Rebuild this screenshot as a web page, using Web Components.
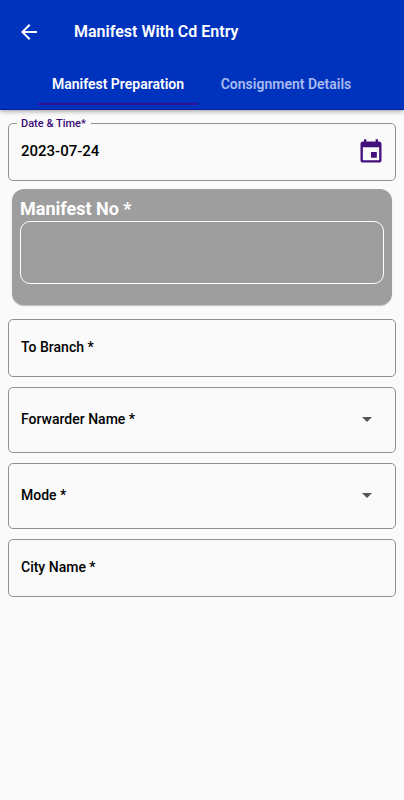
<!DOCTYPE html>
<html lang="en">
<head>
<meta charset="utf-8">
<meta name="viewport" content="width=device-width, initial-scale=1">
<title>Manifest With Cd Entry</title>
<style>
  body { margin: 0; min-height: 100vh; background: #fafafa; color: #000; font-family: Roboto, "Liberation Sans", sans-serif; font-weight: 500; }
</style>
</head>
<body>
<manifest-page></manifest-page>

<script>
const define = (name, html, setup) => customElements.define(name, class extends HTMLElement {
  constructor() {
    super();
    this.attachShadow({ mode: "open" });
  }
  connectedCallback() {
    if (this.shadowRoot.childNodes.length) return;
    const t = document.createElement("template");
    t.innerHTML = html;
    this.shadowRoot.append(t.content.cloneNode(true));
    if (setup) setup(this, this.shadowRoot);
  }
});

const control = `
  * { box-sizing: border-box; }
  :host { display: block; }
  .box { position: relative; display: grid; grid-template-columns: 1fr auto; align-items: center; border: 1px solid #8f8f8f; border-radius: 5px; min-height: 58px; }
  input, select { grid-area: 1 / 1 / 2 / 3; width: 100%; align-self: stretch; border: 0; outline: 0; margin: 0; padding: 0 12px 2px; background: none; font: inherit; font-size: 14px; color: inherit; appearance: none; border-radius: 5px; }
  label { font-size: 14px; line-height: 16px; }
  .inside { grid-area: 1 / 1; padding: 0 12px 2px; pointer-events: none; }
  .filled .inside { visibility: hidden; }
`;

const nameField = (host, root) => {
  root.querySelector("label").textContent = host.getAttribute("label");
  const field = root.querySelector("input, select");
  field.addEventListener("input", () =>
    root.querySelector(".box").classList.toggle("filled", field.value !== ""));
};

define("app-bar", `
  <style>
    :host { display: block; background: #0033bd; color: #fff; border-bottom: 1px solid #0a1f9c; box-shadow: 0 1px 5px rgba(0, 0, 0, .4); }
    .top { display: flex; align-items: center; gap: 33px; height: 64px; padding: 0 17px; }
    button { display: flex; border: 0; padding: 0; background: none; color: inherit; }
    h1 { margin: 0; font-size: 16px; line-height: 20px; font-weight: 600; }
  </style>
  <div class="top">
    <button type="button" aria-label="Back">
      <svg width="24" height="24" viewBox="0 0 24 24" fill="currentColor"><path d="M20 11H7.83l5.59-5.59L12 4l-8 8 8 8 1.41-1.41L7.83 13H20v-2z"/></svg>
    </button>
    <h1></h1>
  </div>
  <slot></slot>
`, (host, root) => { root.querySelector("h1").textContent = host.getAttribute("heading"); });

define("tab-strip", `
  <style>:host { display: flex; justify-content: center; gap: 8px; padding-bottom: 4px; font-weight: 600; }</style>
  <slot></slot>
`, host => {
  host.setAttribute("role", "tablist");
});

define("tab-item", `
  <style>
    :host { display: block; }
    button { display: block; min-width: 160px; height: 41px; padding: 0 12px; border: 0; border-bottom: 2px solid transparent; background: none; font: inherit; font-size: 14px; line-height: 16px; color: #a9bbf0; white-space: nowrap; }
    button[aria-selected="true"] { color: #fff; border-color: #34128f; }
  </style>
  <button type="button" role="tab"><slot></slot></button>
`, (host, root) => {
  root.querySelector("button").setAttribute("aria-selected", host.hasAttribute("selected"));
});

define("date-field", `
  <style>${control}
    label { position: absolute; top: -7px; left: 8px; padding: 0 5px 0 4px; background: #fafafa; color: #3a0a78; font-size: 11px; line-height: 14px; }
    input { font-size: 15px; }
    button { grid-area: 1 / 2; display: flex; margin-right: 10px; border: 0; padding: 0; background: none; color: #43107c; }
  </style>
  <div class="box">
    <label for="f"></label>
    <input id="f" type="text" readonly>
    <button type="button" aria-label="Choose date">
      <svg width="28" height="28" viewBox="0 0 24 24" fill="currentColor"><path d="M17 12h-5v5h5v-5zM16 1v2H8V1H6v2H5c-1.11 0-1.99.9-1.99 2L3 19c0 1.1.89 2 2 2h14c1.1 0 2-.9 2-2V5c0-1.1-.9-2-2-2h-1V1h-2zm3 18H5V8h14v11z"/></svg>
    </button>
  </div>
`, (host, root) => {
  root.querySelector("label").textContent = host.getAttribute("label");
  root.querySelector("input").value = host.getAttribute("value");
});

define("text-field", `
  <style>${control}</style>
  <div class="box">
    <label class="inside" for="f"></label>
    <input id="f" type="text">
  </div>
`, nameField);

define("select-field", `
  <style>${control}
    .box { min-height: 66px; }
    svg { grid-area: 1 / 2; margin: 0 16px 2px 0; pointer-events: none; }
  </style>
  <div class="box">
    <label class="inside" for="f"></label>
    <select id="f"><option value=""></option></select>
    <svg width="24" height="24" viewBox="0 0 24 24" fill="#555"><path d="M7 10l5 5 5-5z"/></svg>
  </div>
`, nameField);

define("number-card", `
  <style>
    * { box-sizing: border-box; }
    :host { display: block; margin: 0 4px; padding: 8px 8px 21px; border-radius: 12px; background: #9e9e9e; color: #fff; box-shadow: 0 1px 1px rgba(0, 0, 0, .25); }
    label { display: block; font-size: 18px; line-height: 24px; font-weight: 700; }
    input { display: block; width: 100%; height: 63px; margin: 0; padding: 0 12px; border: 1px solid #fff; border-radius: 10px; outline: 0; background: none; font: inherit; font-size: 16px; color: inherit; }
  </style>
  <label for="f"></label>
  <input id="f" type="text">
`, (host, root) => { root.querySelector("label").textContent = host.getAttribute("label"); });

define("manifest-page", `
  <style>
    :host { display: block; }
    form { display: flex; flex-direction: column; gap: 10px; padding: 13px 8px; }
    .card { margin: -2px 0 4px; }
  </style>
  <app-bar heading="Manifest With Cd Entry">
    <tab-strip>
      <tab-item selected>Manifest Preparation</tab-item>
      <tab-item>Consignment Details</tab-item>
    </tab-strip>
  </app-bar>
  <form>
    <date-field label="Date &amp; Time*" value="2023-07-24"></date-field>
    <div class="card"><number-card label="Manifest No *"></number-card></div>
    <text-field label="To Branch *"></text-field>
    <select-field label="Forwarder Name *"></select-field>
    <select-field label="Mode *"></select-field>
    <text-field label="City Name *"></text-field>
  </form>
`);
</script>
</body>
</html>
